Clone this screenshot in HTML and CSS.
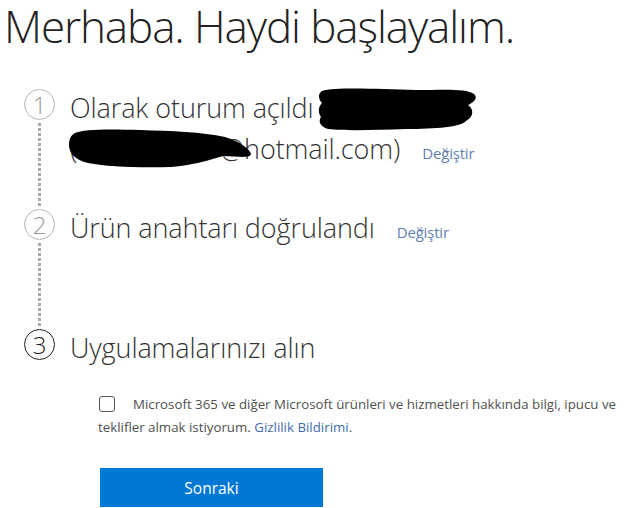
FILE: index.html
```html
<!DOCTYPE html>
<html lang="tr">
<head>
<meta charset="utf-8">
<link rel="stylesheet" href="styles.css">
</head>
<body>
<h1 class="title">Merhaba. Haydi başlayalım.</h1>
<div class="steps">
  <div class="step">
    <div class="marker"><span class="num done">1</span><span class="rail"></span></div>
    <div class="body">
      <div class="line">Olarak oturum açıldı</div>
      <div class="line">(<span class="hidden-user"></span>@hotmail.com)<a class="change first">Değiştir</a></div>
      <svg class="scribble s1" width="162" height="46" viewBox="0 0 162 46"><path d="M6 4 C20 0 60 2 100 3 C125 3 150 1 158 7 C163 12 156 16 152 18 C158 22 158 30 150 34 C145 40 120 42 90 42 C60 43 30 44 12 42 C4 40 2 34 5 30 C2 26 2 20 6 16 C2 12 2 6 6 4 Z" fill="#000"/></svg>
      <svg class="scribble s2" width="190" height="40" viewBox="0 0 190 40"><path d="M8 4 C16 0 42 0 73 1 C104 2 135 3 158 8 C172 12 183 20 184 25 C183 29 175 28 156 27 C140 32 125 36 104 38 C73 39 42 38 21 34 C8 31 2 24 2 16 C2 10 4 6 8 4 Z" fill="#000"/></svg>
    </div>
  </div>
  <div class="step">
    <div class="marker"><span class="num done">2</span><span class="rail"></span></div>
    <div class="body">
      <div class="line">Ürün anahtarı doğrulandı<a class="change second">Değiştir</a></div>
    </div>
  </div>
  <div class="step last">
    <div class="marker"><span class="num current">3</span></div>
    <div class="body">
      <div class="line">Uygulamalarınızı alın</div>
    </div>
  </div>
</div>
<p class="consent"><span class="box"></span>Microsoft 365 ve diğer Microsoft ürünleri ve hizmetleri hakkında bilgi, ipucu ve teklifler almak istiyorum. <a class="link">Gizlilik Bildirimi</a>.</p>
<div class="actions"><button class="next">Sonraki</button></div>
</body>
</html>
```
FILE: styles.css
```css
html, body {
  margin: 0;
  padding: 0;
  background: #fff;
}
body {
  font-family: "Open Sans", "Noto Sans", sans-serif;
  color: #333;
  width: 625px;
  height: 508px;
  overflow: hidden;
}
.title {
  margin: 0 0 35px 0;
  padding: 0 0 0 4px;
  font-size: 44px;
  font-weight: 300;
  line-height: 52px;
  color: #222;
  letter-spacing: -1.1px;
  white-space: nowrap;
}
.steps {
  padding-left: 24px;
}
.step {
  display: flex;
  gap: 15px;
  min-height: 120px;
}
.step.last {
  min-height: 40px;
}
.marker {
  display: flex;
  flex-direction: column;
  align-items: center;
  width: 31px;
  padding-top: 2px;
}
.num {
  box-sizing: border-box;
  width: 31px;
  height: 31px;
  border-radius: 50%;
  display: flex;
  align-items: center;
  justify-content: center;
  font-size: 24px;
  font-weight: 300;
  line-height: 1;
}
.num.done {
  border: 1.5px solid #b5b5b5;
  color: #9a9a9a;
}
.num.current {
  border: 1.5px solid #222;
  color: #222;
}
.rail {
  flex: 1;
  width: 3px;
  margin-top: 3px;
  background: repeating-linear-gradient(to bottom, #a8a8a8 0 3px, transparent 3px 5px);
}
.body {
  position: relative;
}
.line {
  font-size: 27px;
  font-weight: 300;
  line-height: 41px;
  color: #333;
  letter-spacing: -0.1px;
  white-space: nowrap;
}
.hidden-user {
  display: inline-block;
  width: 143px;
}
.mail {
  letter-spacing: 0.3px;
}
.change {
  font-size: 15px;
  font-weight: 400;
  color: #5f7fb3;
  letter-spacing: -0.2px;
}
.change.first {
  margin-left: 22px;
}
.change.second {
  margin-left: 22px;
}
.scribble {
  position: absolute;
  display: block;
}
.s1 {
  left: 246px;
  top: 0;
}
.s2 {
  left: -3px;
  top: 42px;
}
.consent {
  margin: 25px 0 0 98px;
  width: 527px;
  font-size: 13.3px;
  line-height: 23px;
  color: #505050;
  letter-spacing: 0;
}
.box {
  display: inline-block;
  box-sizing: border-box;
  width: 16px;
  height: 16px;
  border: 1px solid #555;
  border-radius: 3px;
  margin: 0 18px 0 1px;
  vertical-align: -3px;
}
.link {
  color: #3f6cae;
}
.actions {
  margin: 29px 0 0 100px;
}
.next {
  width: 223px;
  height: 39px;
  border: 0;
  background: #0078d4;
  color: #fff;
  font-family: "Open Sans", "Noto Sans", sans-serif;
  font-size: 15.5px;
  font-weight: 400;
  padding: 0;
}
```
